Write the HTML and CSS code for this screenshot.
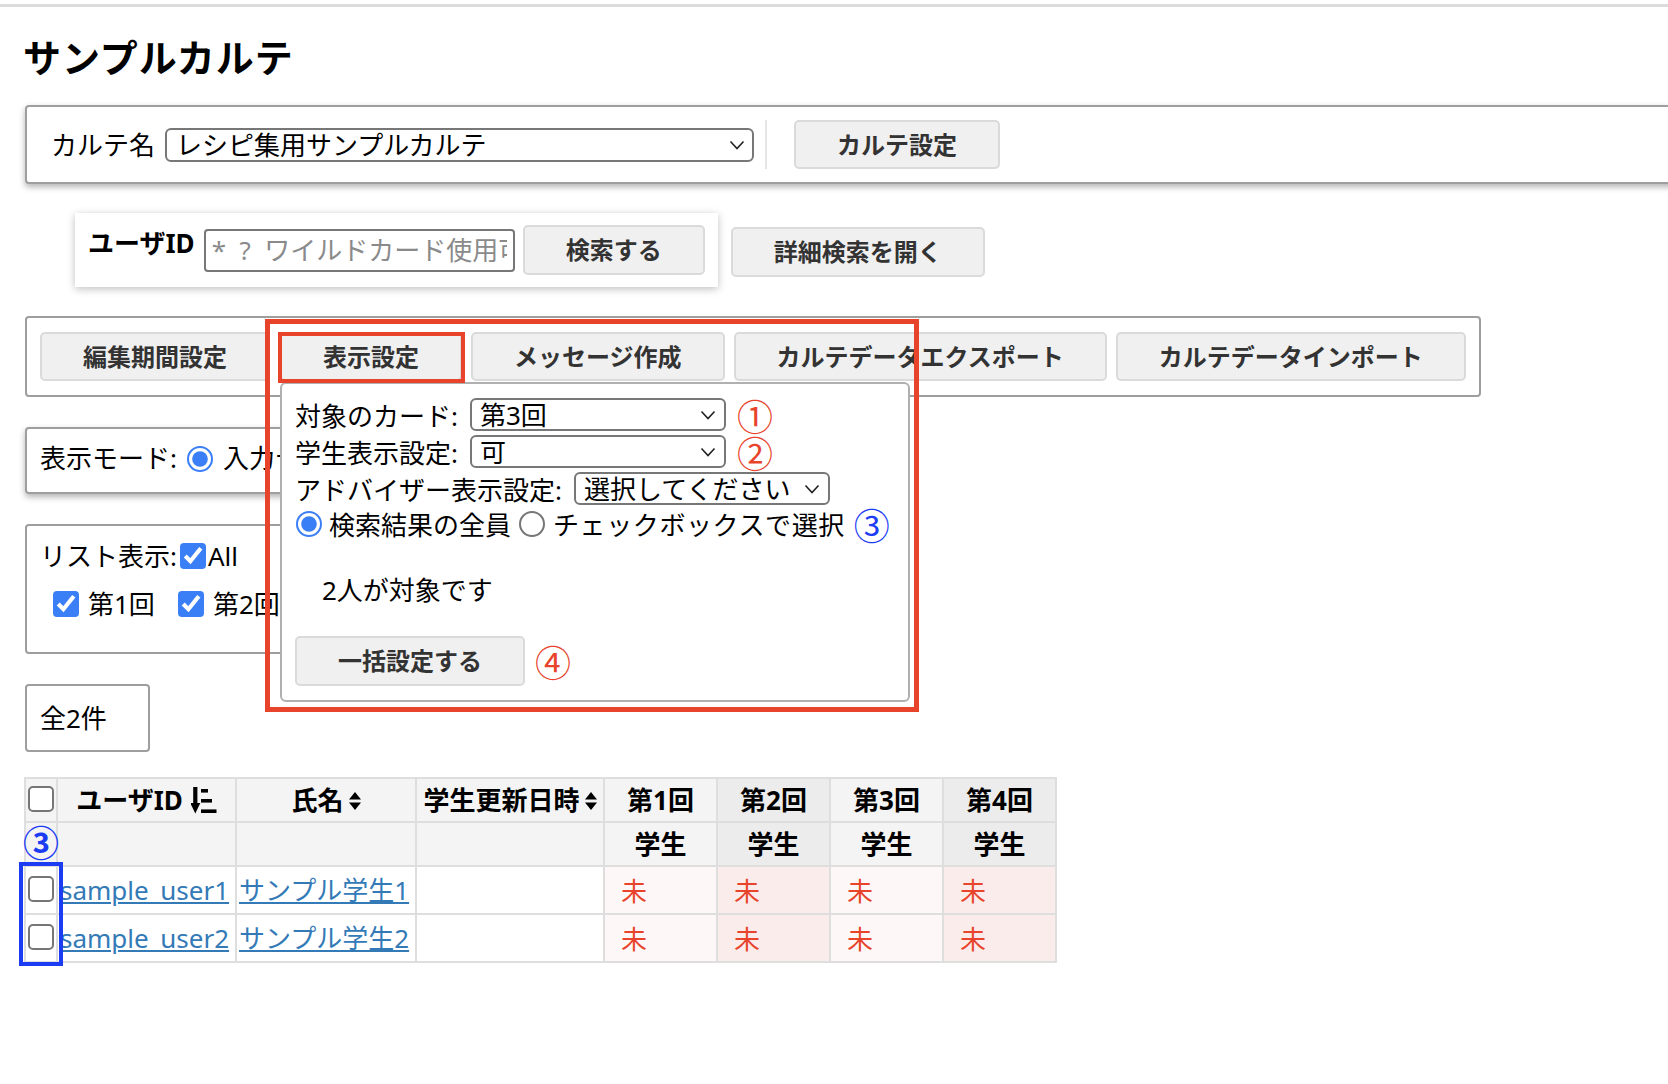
FILE: index.html
```html
<!DOCTYPE html>
<html lang="ja">
<head>
<meta charset="utf-8">
<title>サンプルカルテ</title>
<link rel="stylesheet" href="styles.css">
</head>
<body>
<div class="topbar"></div>
<main class="page">
  <h1 class="title">サンプルカルテ</h1>

  <section class="panel karte">
    <span class="lbl">カルテ名</span>
    <div class="sel sel-karte"><span>レシピ集用サンプルカルテ</span><svg class="chev" viewBox="0 0 16 10" width="16" height="10"><polyline points="1.5,1.5 8,8.5 14.5,1.5" fill="none" stroke="#222" stroke-width="1.6"/></svg></div>
    <span class="vsep"></span>
    <button class="btn">カルテ設定</button>
  </section>

  <div class="search-row">
    <div class="search-box">
      <span class="lbl-b">ユーザID</span>
      <input class="inp" type="text" placeholder="*&nbsp;&nbsp;?&nbsp;&nbsp;ワイルドカード使用可">
      <button class="btn">検索する</button>
    </div>
    <button class="btn btn-detail">詳細検索を開く</button>
  </div>

  <div class="panel toolbar">
    <button class="btn">編集期間設定</button>
    <div class="dd">
      <button class="btn">表示設定</button>
      <div class="popup">
        <div class="prow"><span class="plbl">対象のカード:</span><div class="sel sel-p"><span>第3回</span><svg class="chev" viewBox="0 0 16 10" width="16" height="10"><polyline points="1.5,1.5 8,8.5 14.5,1.5" fill="none" stroke="#222" stroke-width="1.6"/></svg></div><span class="num red">①</span></div>
        <div class="prow"><span class="plbl">学生表示設定:</span><div class="sel sel-p"><span>可</span><svg class="chev" viewBox="0 0 16 10" width="16" height="10"><polyline points="1.5,1.5 8,8.5 14.5,1.5" fill="none" stroke="#222" stroke-width="1.6"/></svg></div><span class="num red">②</span></div>
        <div class="prow"><span class="plbl">アドバイザー表示設定:</span><div class="sel sel-p"><span>選択してください</span><svg class="chev" viewBox="0 0 16 10" width="16" height="10"><polyline points="1.5,1.5 8,8.5 14.5,1.5" fill="none" stroke="#222" stroke-width="1.6"/></svg></div></div>
        <div class="prow radios">
          <input class="rd rd-first" type="radio" name="target" checked><span>検索結果の全員</span>
          <input class="rd rd-second" type="radio" name="target"><span class="wide">チェックボックスで選択</span>
          <span class="num blue">③</span>
        </div>
        <div class="target">2人が対象です</div>
        <div class="prow prow-btn"><button class="btn btn-bulk">一括設定する</button><span class="num red">④</span></div>
      </div>
      <div class="anno anno-big"></div>
      <div class="anno anno-small"></div>
    </div>
    <button class="btn">メッセージ作成</button>
    <button class="btn">カルテデータエクスポート</button>
    <button class="btn">カルテデータインポート</button>
  </div>

  <div class="panel mode">
    <span>表示モード:</span>
    <input class="rd rd-mode" type="radio" name="mode" checked><span>入力データ</span>
    <input class="rd rd-mode" type="radio" name="mode"><span>集計データ</span>
  </div>

  <div class="panel listview">
    <div class="lv-head"><span>リスト表示:</span><input class="cb cb-all" type="checkbox" checked><span>All</span></div>
    <div class="lv-items">
      <label class="lv-item"><input class="cb" type="checkbox" checked><span>第1回</span></label>
      <label class="lv-item"><input class="cb" type="checkbox" checked><span>第2回</span></label>
      <label class="lv-item"><input class="cb" type="checkbox" checked><span>第3回</span></label>
      <label class="lv-item"><input class="cb" type="checkbox" checked><span>第4回</span></label>
    </div>
  </div>

  <div class="panel count">全2件</div>

  <div class="table-wrap">
    <table class="grid">
      <colgroup>
        <col class="c-cb"><col class="c-id"><col class="c-name"><col class="c-date">
        <col class="c-card"><col class="c-card"><col class="c-card"><col class="c-card">
      </colgroup>
      <thead>
        <tr class="hr1">
          <th class="cbcell"><input class="cb" type="checkbox"></th>
          <th>ユーザID<svg class="ico" viewBox="0 0 26 28" width="26" height="28"><rect x="2.2" y="1" width="4.2" height="18" fill="#000"/><polygon points="-0.7,17 9.3,17 4.3,27.5" fill="#000"/><rect x="10" y="3" width="7" height="3.6" fill="#000"/><rect x="10" y="13" width="11" height="3.6" fill="#000"/><rect x="10" y="23.4" width="15.5" height="3.6" fill="#000"/></svg></th>
          <th>氏名<svg class="ico ico-s" viewBox="0 0 12 18" width="12" height="18"><polygon points="6,0 12,7.5 0,7.5" fill="#000"/><polygon points="0,10.5 12,10.5 6,18" fill="#000"/></svg></th>
          <th>学生更新日時<svg class="ico ico-s" viewBox="0 0 12 18" width="12" height="18"><polygon points="6,0 12,7.5 0,7.5" fill="#000"/><polygon points="0,10.5 12,10.5 6,18" fill="#000"/></svg></th>
          <th>第1回</th>
          <th class="alt">第2回</th>
          <th>第3回</th>
          <th class="alt">第4回</th>
        </tr>
        <tr class="hr2">
          <th class="cbcell"><span class="num blue num-t">③</span></th>
          <th></th>
          <th></th>
          <th></th>
          <th>学生</th>
          <th class="alt">学生</th>
          <th>学生</th>
          <th class="alt">学生</th>
        </tr>
      </thead>
      <tbody>
        <tr>
          <td class="cbcell"><input class="cb" type="checkbox"></td>
          <td><a href="#">sample_user1</a></td>
          <td><a href="#">サンプル学生1</a></td>
          <td></td>
          <td class="mi">未</td>
          <td class="mi alt">未</td>
          <td class="mi">未</td>
          <td class="mi alt">未</td>
        </tr>
        <tr>
          <td class="cbcell"><input class="cb" type="checkbox"></td>
          <td><a href="#">sample_user2</a></td>
          <td><a href="#">サンプル学生2</a></td>
          <td></td>
          <td class="mi">未</td>
          <td class="mi alt">未</td>
          <td class="mi">未</td>
          <td class="mi alt">未</td>
        </tr>
      </tbody>
    </table>
    <div class="anno-blue"></div>
  </div>
</main>
</body>
</html>
```

FILE: styles.css
```css
* { box-sizing: border-box; }

html, body { overflow-x: hidden; }

body {
  margin: 0;
  background: #fff;
  color: #000;
  font-family: "Noto Sans", "Noto Sans CJK JP", sans-serif;
  font-size: 26px;
}

.topbar {
  height: 3px;
  margin-top: 4px;
  background: #dcdcdc;
}

.page {
  padding: 0 0 80px 25px;
}

.title {
  margin: 25px 0 0 -2px;
  font-size: 38px;
  line-height: 50px;
  font-weight: 700;
  letter-spacing: 1px;
}

.panel {
  border: 2px solid #9e9e9e;
  border-radius: 4px;
  background: #fff;
}

/* buttons */
.btn {
  height: 49px;
  padding: 0 41px;
  border: 2px solid #dadada;
  border-radius: 5px;
  background: #f0f0f0;
  color: #333;
  font-family: "Noto Sans", "Noto Sans CJK JP", sans-serif;
  font-size: 24px;
  font-weight: 700;
  line-height: 1;
  white-space: nowrap;
}

/* select look-alike */
.sel {
  display: flex;
  align-items: center;
  justify-content: space-between;
  border: 2px solid #777;
  border-radius: 6px;
  background: #fff;
  line-height: 1;
  white-space: nowrap;
}
.chev { flex: none; }

/* karte panel */
.karte {
  margin-top: 23px;
  width: 1720px;
  display: flex;
  align-items: center;
  padding: 13px 24px;
  box-shadow: 0 3px 6px rgba(0, 0, 0, 0.3);
}
.lbl { line-height: 36px; }
.sel-karte {
  width: 589px;
  height: 34px;
  margin-left: 10px;
  padding: 0 7px 0 9px;
}
.vsep {
  align-self: stretch;
  width: 2px;
  margin: 0 27px 0 11px;
  background: #e6e6e6;
}

/* search */
.search-row {
  display: flex;
  align-items: center;
  margin: 29px 0 0 50px;
}
.search-box {
  display: flex;
  align-items: center;
  padding: 12px 13px;
  background: #fff;
  box-shadow: 0 2px 8px rgba(0, 0, 0, 0.25);
}
.search-box .btn { height: 50px; }
.lbl-b {
  align-self: flex-start;
  font-weight: 700;
  line-height: 36px;
}
.inp {
  width: 311px;
  height: 43px;
  margin: 0 8px 0 9px;
  padding: 0 6px;
  border: 2px solid #777;
  border-radius: 4px;
  font-family: "Noto Sans", "Noto Sans CJK JP", sans-serif;
  font-size: 26px;
}
.inp::placeholder { color: #8a8a8a; }
.btn-detail {
  height: 50px;
  margin: 4px 0 0 13px;
}

/* toolbar */
.toolbar {
  display: flex;
  width: fit-content;
  margin-top: 29px;
  padding: 14px 13px;
  gap: 9px;
}
.dd {
  position: relative;
  margin-left: 1px;
}

.popup {
  position: absolute;
  left: 0;
  top: 50px;
  z-index: 5;
  width: 630px;
  padding: 12px 13px 14px;
  border: 2px solid #b0b0b0;
  border-radius: 6px;
  background: #fff;
  color: #000;
}
.prow {
  display: flex;
  align-items: center;
  height: 37px;
  white-space: nowrap;
}
.sel-p {
  width: 256px;
  height: 33px;
  margin-left: 12px;
  padding: 0 8px 0 8px;
}
.num {
  font-family: "Noto Sans CJK JP", sans-serif;
  font-size: 36px;
  line-height: 1;
}
.red { color: #e8442c; }
.blue { color: #1c3cf4; }
.prow .num { margin-left: 11px; }

.radios { height: 34px; }
.rd {
  zoom: 2;
  margin: 0;
  accent-color: #3b7ff6;
}
.rd-first { margin: 0 3.5px 0 0.5px; }
.rd-second { margin: 0 4px 0 4px; }
.wide { letter-spacing: 0.6px; }
.radios .num { margin-left: 9px; }

.target {
  margin-top: 31px;
  padding-left: 27px;
  line-height: 36px;
}
.prow-btn {
  height: 50px;
  margin-top: 28px;
}
.btn-bulk { height: 50px; }
.prow-btn .num { margin-left: 10px; }

.anno {
  position: absolute;
  z-index: 6;
  pointer-events: none;
}
.anno-big {
  left: -15px;
  top: -13px;
  width: 654px;
  height: 393px;
  border: 5px solid #e8442c;
}
.anno-small {
  left: -2px;
  top: 0;
  width: 187px;
  height: 51px;
  border: 4px solid #e8442c;
}

/* display mode */
.mode {
  display: flex;
  align-items: center;
  width: fit-content;
  margin-top: 30px;
  padding: 10px 40px 14px 13px;
  line-height: 39px;
  box-shadow: 0 3px 6px rgba(0, 0, 0, 0.3);
}
.rd-mode { margin: 0 5px 0 5px; }

/* list view */
.listview {
  width: fit-content;
  margin-top: 30px;
  padding: 12px 40px 30px 13px;
}
.lv-head {
  display: flex;
  align-items: center;
  line-height: 36px;
}
.cb {
  zoom: 2;
  margin: 0;
  accent-color: #3b7ff6;
}
.cb-all { margin: 0 1px 0 1.5px; }
.lv-items {
  display: flex;
  gap: 23px;
  margin-top: 12px;
  padding-left: 13px;
  line-height: 36px;
}
.lv-item {
  display: flex;
  align-items: center;
}
.lv-item .cb { margin-right: 4.5px; }

/* count */
.count {
  width: 125px;
  margin-top: 30px;
  padding: 13px;
  line-height: 38px;
}

/* table */
.table-wrap {
  position: relative;
  width: fit-content;
  margin: 25px 0 0 -1px;
}
.grid {
  border-collapse: collapse;
  table-layout: fixed;
  width: 1031px;
}
.c-cb { width: 32px; }
.c-id { width: 179px; }
.c-name { width: 180px; }
.c-date { width: 188px; }
.c-card { width: 113px; }

.grid th,
.grid td {
  border: 2px solid #dedede;
  padding: 2px;
  white-space: nowrap;
  overflow: visible;
}
.grid th {
  background: #f4f4f4;
  font-weight: 700;
  text-align: center;
}
.grid th.alt { background: #ececec; }
.hr1 th { height: 44px; line-height: 36px; }
.hr2 th { height: 42px; line-height: 36px; }
.grid td {
  height: 48px;
  line-height: 40px;
  text-align: left;
}
.grid td.cbcell,
.grid th.cbcell {
  text-align: center;
  padding: 0;
}
.cbcell .cb { vertical-align: middle; position: relative; top: -2px; }
.num-t { display: inline-block; margin-left: -4px; margin-right: -4px; }
.grid a {
  color: #337ab7;
  text-decoration: underline;
}
.grid td.mi {
  padding-left: 16px;
  color: #e8442c;
  background: #fdf8f7;
  font-family: "Noto Sans CJK JP", sans-serif;
}
.grid td.mi.alt { background: #fbecec; }

.ico {
  vertical-align: middle;
  margin: -5px 0 0 8px;
}
.ico-s { margin: -4px 0 0 5px; }

.anno-blue {
  position: absolute;
  left: -5px;
  top: 85px;
  width: 44px;
  height: 104px;
  border: 4px solid #1c3cf4;
}
```
